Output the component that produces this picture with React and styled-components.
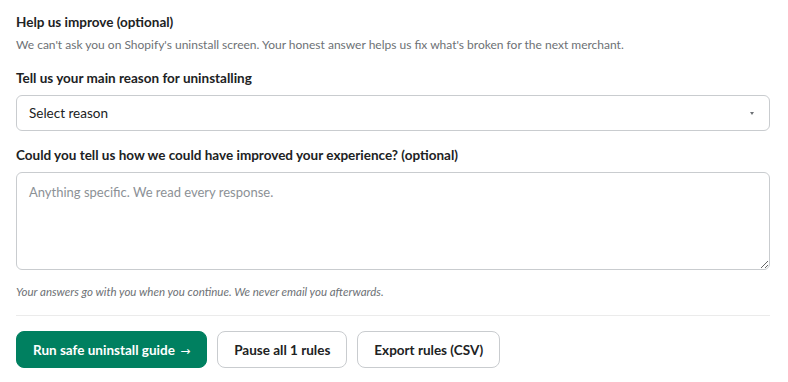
import React, { useState } from 'react';
import styled, { createGlobalStyle } from 'styled-components';

const GlobalStyle = createGlobalStyle`
  * { box-sizing: border-box; }
  body {
    margin: 0;
    background: #ffffff;
    font-family: Lato, "Noto Sans", sans-serif;
    color: #202223;
  }
`;

const reasons = [
  'Too expensive',
  'Missing a feature I need',
  'Hard to set up',
  'Found another app',
  'Only needed it temporarily',
];

function App() {
  const [reason, setReason] = useState('');
  const [feedback, setFeedback] = useState('');

  return (
    <Page>
      <GlobalStyle />
      <Section>
        <Title>Help us improve (optional)</Title>
        <Description>
          We can't ask you on Shopify's uninstall screen. Your honest answer helps us fix what's broken for
          the next merchant.
        </Description>

        <Field>
          <Label htmlFor="reason">Tell us your main reason for uninstalling</Label>
          <SelectWrap>
            <Select id="reason" value={reason} onChange={(e) => setReason(e.target.value)}>
              <option value="">Select reason</option>
              {reasons.map((r) => (
                <option key={r} value={r}>
                  {r}
                </option>
              ))}
            </Select>
            <Caret />
          </SelectWrap>
        </Field>

        <Field>
          <Label htmlFor="feedback">Could you tell us how we could have improved your experience? (optional)</Label>
          <TextArea
            id="feedback"
            value={feedback}
            onChange={(e) => setFeedback(e.target.value)}
            placeholder="Anything specific. We read every response."
          />
        </Field>

        <Note>Your answers go with you when you continue. We never email you afterwards.</Note>
      </Section>

      <Actions>
        <Button $primary>
          Run safe uninstall guide <Arrow>→</Arrow>
        </Button>
        <Button>Pause all 1 rules</Button>
        <Button>Export rules (CSV)</Button>
      </Actions>
    </Page>
  );
}

const Page = styled.div`
  width: 754px;
  margin-left: 16px;
  padding-top: 12px;
`;

const Section = styled.div`
  display: flex;
  flex-direction: column;
  padding-bottom: 15px;
  border-bottom: 1px solid #ebebeb;
`;

const Title = styled.h2`
  margin: 0;
  font-size: 13.5px;
  line-height: 20px;
  font-weight: 700;
`;

const Description = styled.p`
  margin: 4px 0 0;
  font-size: 12px;
  line-height: 18px;
  color: #6d7175;
`;

const Field = styled.div`
  display: flex;
  flex-direction: column;
  gap: 8px;
  margin-top: 15px;
`;

const Label = styled.label`
  font-size: 13.5px;
  line-height: 18px;
  font-weight: 700;
`;

const SelectWrap = styled.div`
  position: relative;
`;

const Select = styled.select`
  width: 100%;
  height: 36px;
  padding: 0 12px;
  appearance: none;
  border: 1px solid #c9cccf;
  border-radius: 6px;
  background: #ffffff;
  font-family: inherit;
  font-size: 13.5px;
  color: #202223;
`;

const Caret = styled.span`
  position: absolute;
  right: 16px;
  top: 17px;
  width: 0;
  height: 0;
  border-left: 2.5px solid transparent;
  border-right: 2.5px solid transparent;
  border-top: 3px solid #6d7175;
  pointer-events: none;
`;

const TextArea = styled.textarea`
  width: 100%;
  height: 98px;
  padding: 10px 12px;
  border: 1px solid #c9cccf;
  border-radius: 6px;
  font-family: inherit;
  font-size: 13px;
  line-height: 18px;
  color: #202223;
  resize: vertical;

  &::placeholder {
    color: #8c9196;
  }
`;

const Note = styled.p`
  margin: 14px 0 0;
  font-size: 11.5px;
  line-height: 16px;
  font-style: italic;
  color: #6d7175;
`;

const Actions = styled.div`
  display: flex;
  gap: 10px;
  padding-top: 15px;
`;

const Button = styled.button`
  height: 37px;
  padding: 0 16px;
  border-radius: 8px;
  border: 1px solid ${(p) => (p.$primary ? '#008060' : '#c9cccf')};
  background: ${(p) => (p.$primary ? '#008060' : '#ffffff')};
  color: ${(p) => (p.$primary ? '#ffffff' : '#202223')};
  font-family: inherit;
  font-size: 13.5px;
  font-weight: 700;
  cursor: pointer;
`;

const Arrow = styled.span`
  margin-left: 2px;
  font-family: "DejaVu Sans", sans-serif;
  font-size: 12px;
  font-weight: 400;
`;

export default App;
